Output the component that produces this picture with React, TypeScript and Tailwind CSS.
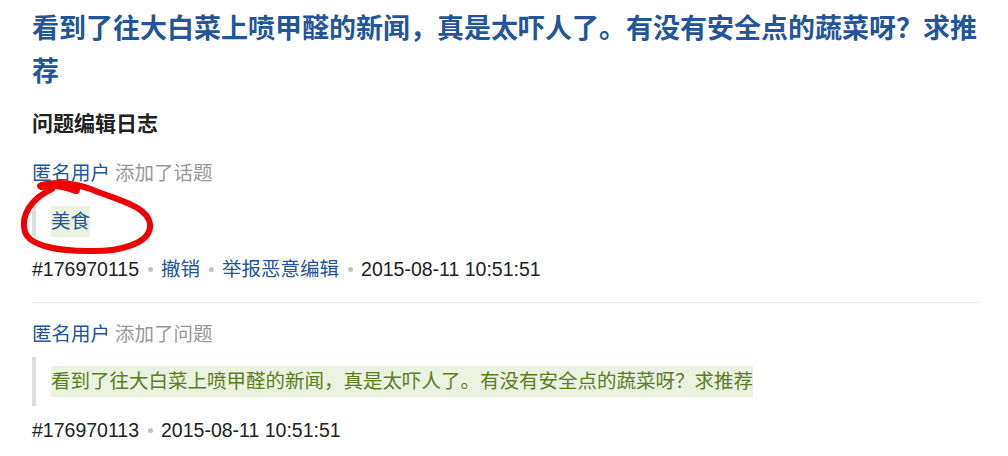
const font = "font-['Liberation_Sans','Noto_Sans_CJK_SC',sans-serif]";

function Dot() {
  return <span className="inline-block w-[5px] h-[5px] rounded-full bg-[#c4c4c4] ml-[9px] mr-[8px] align-[4px]" />;
}

function Meta({ id, actions, time }: { id: string; actions: string[]; time: string }) {
  return (
    <div className="h-[30px] leading-[30px] text-[19.5px] text-[#222]">
      <span>{id}</span>
      {actions.map((a) => (
        <span key={a}>
          <Dot />
          <a className="text-[#225599]">{a}</a>
        </span>
      ))}
      <Dot />
      <span>{time}</span>
    </div>
  );
}

export default function App() {
  return (
    <div className={`relative w-[1008px] h-[456px] overflow-hidden bg-white ${font}`}>
      <div className="w-[948px] ml-[32px] pt-[8px]">
        <h1 className="text-[27px] leading-[43px] font-bold text-[#225599]">
          看到了往大白菜上喷甲醛的新闻，真是太吓人了。有没有安全点的蔬菜呀？求推荐
        </h1>
        <h2 className="mt-[15px] h-[30px] leading-[30px] text-[21px] font-bold text-[#222]">问题编辑日志</h2>

        {/* item 1 */}
        <div className="mt-[19px] pb-[18px] border-b border-[#ebebeb]">
          <div className="h-[30px] leading-[30px] text-[19.5px]">
            <a className="text-[#225599]">匿名用户</a>
            <span className="ml-[5px] text-[#999]">添加了话题</span>
          </div>
          <div className="mt-[10px] h-[38px] border-l-[4px] border-[#dddddd] pl-[15px] pt-[8px]">
            <span className="inline-block h-[31px] leading-[31px] bg-[#ecf2e0] text-[19.5px] text-[#225599]">美食</span>
          </div>
          <div className="mt-[18px]">
            <Meta id="#176970115" actions={["撤销", "举报恶意编辑"]} time="2015-08-11 10:51:51" />
          </div>
        </div>

        {/* item 2 */}
        <div className="pt-[16px]">
          <div className="h-[30px] leading-[30px] text-[19.5px]">
            <a className="text-[#225599]">匿名用户</a>
            <span className="ml-[5px] text-[#999]">添加了问题</span>
          </div>
          <div className="mt-[8px] h-[49px] border-l-[4px] border-[#dddddd] pl-[15px] pt-[9px]">
            <span className="inline-block h-[31px] leading-[31px] bg-[#ecf2e0] text-[19.5px] text-[#5b7d1e]">
              看到了往大白菜上喷甲醛的新闻，真是太吓人了。有没有安全点的蔬菜呀？求推荐
            </span>
          </div>
          <div className="mt-[9px]">
            <Meta id="#176970113" actions={[]} time="2015-08-11 10:51:51" />
          </div>
        </div>
      </div>

      {/* hand-drawn red annotation */}
      <svg className="absolute left-0 top-0 pointer-events-none" width="1008" height="456" viewBox="0 0 1008 456">
        <path
          d="M40 186 C58 180 80 184 98 192 C125 202 148 208 150 224 C152 244 118 252 88 251 C58 251 30 246 25 232 C20 215 32 198 52 189"
          fill="none"
          stroke="#f00000"
          strokeWidth="6"
          strokeLinecap="round"
        />
        <path d="M42 186 C55 183 66 186 76 190" fill="none" stroke="#f00000" strokeWidth="8" strokeLinecap="round" />
      </svg>
    </div>
  );
}
